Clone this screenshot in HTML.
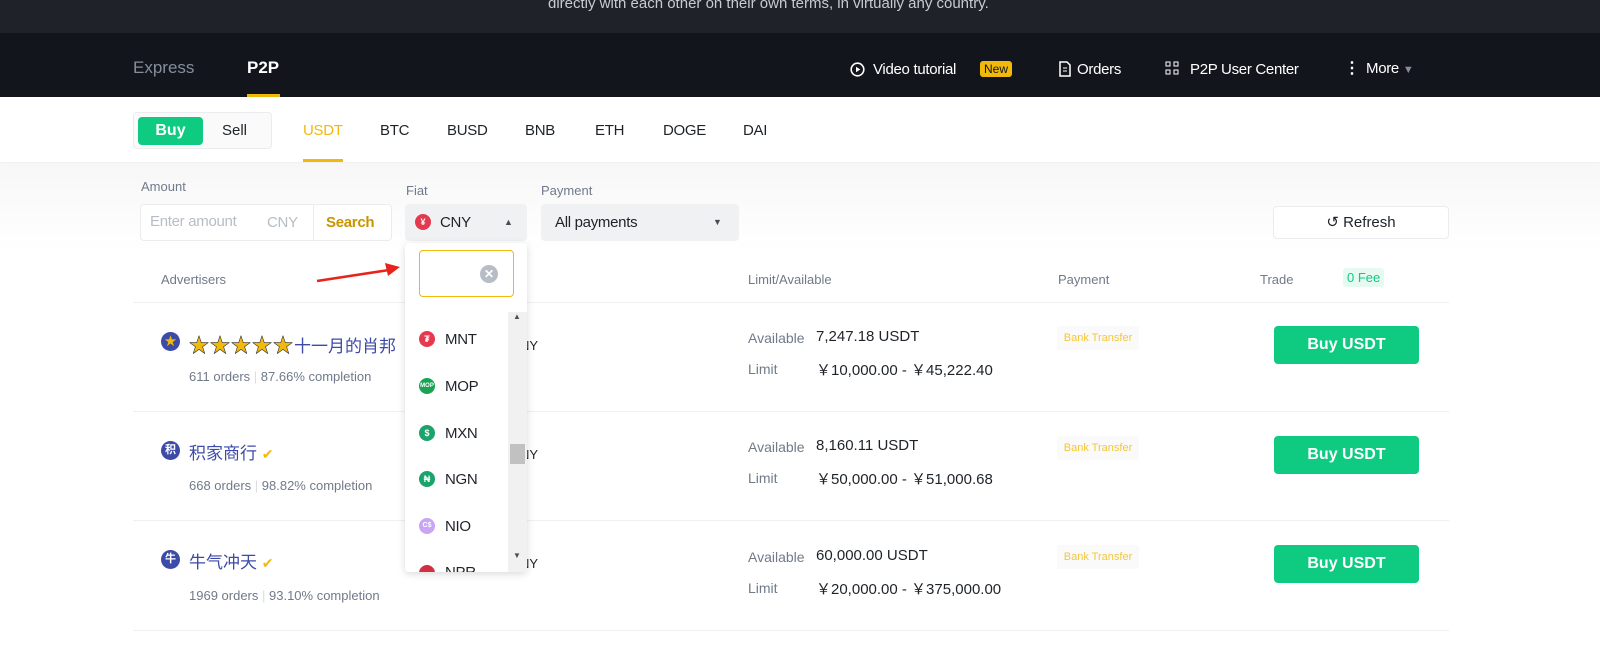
<!DOCTYPE html>
<html><head><meta charset="utf-8"><style>
*{margin:0;padding:0;box-sizing:border-box}
body{width:1600px;height:649px;overflow:hidden;font-family:"Liberation Sans","Noto Sans CJK SC",sans-serif;background:#fff;position:relative;color:#1e2329}
.a{position:absolute;white-space:nowrap}
.top{position:absolute;left:0;top:0;width:1600px;height:33px;background:#1f2228}
.nav{position:absolute;left:0;top:33px;width:1600px;height:64px;background:#12161c}
.bar{position:absolute;left:0;top:97px;width:1600px;height:65px;background:#fff;box-shadow:0 2px 4px rgba(0,0,0,.08)}
.filt{position:absolute;left:0;top:163px;width:1600px;height:90px;background:linear-gradient(#f7f7f7,#fff)}
.g{color:#707a8a}
.btn{background:#0ecb81;color:#fff;font-weight:bold;border-radius:4px;text-align:center}
.hr{position:absolute;left:133px;width:1316px;height:1px;background:#eef0f2}
.ic{position:absolute;width:16px;height:16px;border-radius:50%;color:#fff;font-size:9px;text-align:center;line-height:16px;font-weight:bold}
.bt{position:absolute;width:82px;height:24px;background:#fafafa;color:#f0b90b;font-size:11px;text-align:center;line-height:24px;border-radius:2px;opacity:.8}
.n{font-size:15px;letter-spacing:-.3px}
</style></head><body>
<div class="top"></div>
<div class="a" style="left:548px;top:-5px;color:#c8ccd2;font-size:15px">directly with each other on their own terms, in virtually any country.</div>
<div class="nav"></div>
<div class="a" style="left:133px;top:58px;color:#848e9c;font-size:17px">Express</div>
<div class="a" style="left:247px;top:58px;color:#fff;font-size:17px;font-weight:bold">P2P</div>
<div class="a" style="left:247px;top:94px;width:33px;height:3px;background:#f0b90b"></div>
<svg class="a" style="left:850px;top:62px" width="15" height="15"><circle cx="7.5" cy="7.5" r="6.3" fill="none" stroke="#fff" stroke-width="1.6"/><path d="M6 4.8L10.3 7.5 6 10.2z" fill="#fff"/></svg>
<div class="a n" style="left:873px;top:61px;color:#fff">Video tutorial</div>
<div class="a" style="left:980px;top:61px;background:#f0b90b;color:#12161c;font-size:12px;padding:1px 4px;border-radius:3px">New</div>
<svg class="a" style="left:1059px;top:61px" width="12" height="16"><path d="M1 1h7l3 3v11H1z" fill="none" stroke="#fff" stroke-width="1.5"/><path d="M4 7h4M4 10h4" stroke="#fff"/></svg>
<div class="a n" style="left:1077px;top:61px;color:#fff">Orders</div>
<svg class="a" style="left:1165px;top:61px" width="14" height="17"><rect x="1" y="1" width="4" height="4" fill="none" stroke="#fff"/><rect x="9" y="1" width="4" height="4" fill="none" stroke="#fff"/><rect x="1" y="9" width="4" height="4" fill="none" stroke="#fff"/><rect x="9" y="9" width="4" height="4" fill="none" stroke="#fff"/></svg>
<div class="a n" style="left:1190px;top:61px;color:#fff">P2P User Center</div>
<div class="a" style="left:1344px;top:58px;color:#fff;font-size:16px;font-weight:bold">⋮</div>
<div class="a n" style="left:1366px;top:60px;color:#fff">More <span style="color:#848e9c;font-size:11px">▼</span></div>
<div class="bar"></div>
<div class="a" style="left:133px;top:112px;width:139px;height:37px;border:1px solid #eaecef;border-radius:4px;background:#fafafa"></div>
<div class="a btn" style="left:138px;top:117px;width:65px;height:28px;line-height:28px;font-size:16px">Buy</div>
<div class="a" style="left:222px;top:122px;font-size:15px">Sell</div>
<div class="a n" style="left:303px;top:122px;color:#f0b90b">USDT</div>
<div class="a" style="left:303px;top:159px;width:40px;height:3px;background:#f0b90b"></div>
<div class="a n" style="left:380px;top:122px">BTC</div>
<div class="a n" style="left:447px;top:122px">BUSD</div>
<div class="a n" style="left:525px;top:122px">BNB</div>
<div class="a n" style="left:595px;top:122px">ETH</div>
<div class="a n" style="left:663px;top:122px">DOGE</div>
<div class="a n" style="left:743px;top:122px">DAI</div>
<div class="filt"></div>
<div class="a g" style="left:141px;top:179px;font-size:13px">Amount</div>
<div class="a" style="left:140px;top:204px;width:252px;height:37px;border:1px solid #eaecef;border-radius:4px;background:#fff"></div>
<div class="a" style="left:313px;top:205px;width:1px;height:35px;background:#eaecef"></div>
<div class="a n" style="left:150px;top:213px;color:#b7bdc6">Enter amount</div>
<div class="a n" style="left:267px;top:214px;color:#b7bdc6">CNY</div>
<div class="a n" style="left:326px;top:214px;color:#c99400;font-weight:bold">Search</div>
<div class="a g" style="left:406px;top:183px;font-size:13px">Fiat</div>
<div class="a" style="left:405px;top:204px;width:122px;height:37px;background:#f0f1f2;border-radius:4px"></div>
<div class="ic" style="left:415px;top:214px;background:#e5394f">¥</div>
<div class="a n" style="left:440px;top:214px">CNY</div>
<div class="a" style="left:504px;top:217px;font-size:9px;color:#474d57">▲</div>
<div class="a g" style="left:541px;top:183px;font-size:13px">Payment</div>
<div class="a" style="left:541px;top:204px;width:198px;height:37px;background:#f0f1f2;border-radius:4px"></div>
<div class="a n" style="left:555px;top:214px">All payments</div>
<div class="a" style="left:713px;top:217px;font-size:9px;color:#474d57">▼</div>
<div class="a" style="left:1273px;top:206px;width:176px;height:33px;border:1px solid #eaecef;border-radius:4px;background:#fff;text-align:center;line-height:31px;font-size:15px">↺ Refresh</div>
<div class="a g" style="left:161px;top:272px;font-size:13px">Advertisers</div>
<div class="a g" style="left:748px;top:272px;font-size:13px">Limit/Available</div>
<div class="a g" style="left:1058px;top:272px;font-size:13px">Payment</div>
<div class="a g" style="left:1260px;top:272px;font-size:13px">Trade</div>
<div class="a" style="left:1343px;top:268px;background:#e6faf2;color:#0ecb81;font-size:13px;padding:2px 4px;border-radius:3px">0 Fee</div>
<div class="hr" style="top:302px"></div>
<div class="hr" style="top:411px"></div>
<div class="hr" style="top:520px"></div>
<div class="hr" style="top:630px"></div>
<svg class="a" style="left:315px;top:262px" width="85" height="22"><path d="M2 19L74 8" stroke="#e8231c" stroke-width="2.5"/><path d="M85 5L70 1 73 14z" fill="#e8231c"/></svg>
<div class="ic" style="left:161px;top:332px;width:19px;height:19px;background:#3c4aa8;color:#f0b90b;font-size:12px;line-height:19px">★</div>
<div class="a" style="left:189px;top:329px;font-size:17px;color:#3c4aa8"><span style="color:#f0b90b;-webkit-text-stroke:.6px #333;font-size:20px;letter-spacing:1px">★★★★★</span>十一月的肖邦</div>
<div class="a g" style="left:189px;top:369px;font-size:13px">611 orders <span style="color:#ddd">|</span> 87.66% completion</div>
<div class="ic" style="left:161px;top:441px;width:19px;height:19px;background:#3c4aa8;font-size:11px;line-height:19px">积</div>
<div class="a" style="left:189px;top:439px;font-size:17px;color:#3c4aa8">积家商行 <span style="color:#f0b90b;font-size:14px">✔</span></div>
<div class="a g" style="left:189px;top:478px;font-size:13px">668 orders <span style="color:#ddd">|</span> 98.82% completion</div>
<div class="ic" style="left:161px;top:550px;width:19px;height:19px;background:#3c4aa8;font-size:11px;line-height:19px">牛</div>
<div class="a" style="left:189px;top:548px;font-size:17px;color:#3c4aa8">牛气冲天 <span style="color:#f0b90b;font-size:14px">✔</span></div>
<div class="a g" style="left:189px;top:588px;font-size:13px">1969 orders <span style="color:#ddd">|</span> 93.10% completion</div>
<div class="a" style="left:520px;top:338px;font-size:13px">NY</div>
<div class="a" style="left:520px;top:447px;font-size:13px">NY</div>
<div class="a" style="left:520px;top:556px;font-size:13px">NY</div>
<div class="a g" style="left:748px;top:330px;font-size:14px">Available</div>
<div class="a" style="left:816px;top:328px;font-size:15px">7,247.18 USDT</div>
<div class="a g" style="left:748px;top:361px;font-size:14px">Limit</div>
<div class="a" style="left:816px;top:359px;font-size:15px">￥10,000.00 - ￥45,222.40</div>
<div class="a g" style="left:748px;top:439px;font-size:14px">Available</div>
<div class="a" style="left:816px;top:437px;font-size:15px">8,160.11 USDT</div>
<div class="a g" style="left:748px;top:470px;font-size:14px">Limit</div>
<div class="a" style="left:816px;top:468px;font-size:15px">￥50,000.00 - ￥51,000.68</div>
<div class="a g" style="left:748px;top:549px;font-size:14px">Available</div>
<div class="a" style="left:816px;top:547px;font-size:15px">60,000.00 USDT</div>
<div class="a g" style="left:748px;top:580px;font-size:14px">Limit</div>
<div class="a" style="left:816px;top:578px;font-size:15px">￥20,000.00 - ￥375,000.00</div>
<div class="bt" style="left:1057px;top:326px">Bank Transfer</div>
<div class="bt" style="left:1057px;top:436px">Bank Transfer</div>
<div class="bt" style="left:1057px;top:545px">Bank Transfer</div>
<div class="a btn" style="left:1274px;top:326px;width:145px;height:38px;line-height:38px;font-size:16px">Buy USDT</div>
<div class="a btn" style="left:1274px;top:436px;width:145px;height:38px;line-height:38px;font-size:16px">Buy USDT</div>
<div class="a btn" style="left:1274px;top:545px;width:145px;height:38px;line-height:38px;font-size:16px">Buy USDT</div>
<div class="a" style="left:405px;top:243px;width:122px;height:329px;background:#fff;border-radius:4px;box-shadow:0 2px 8px rgba(0,0,0,.15);overflow:hidden">
<div class="a" style="left:14px;top:7px;width:95px;height:47px;border:1px solid #f0b90b;border-radius:4px"></div>
<div class="ic" style="left:75px;top:22px;width:18px;height:18px;background:#b7bdc6;font-size:12px;line-height:18px">✕</div>
<div class="a" style="left:103px;top:69px;width:19px;height:260px;background:#f1f1f1"></div>
<div class="a" style="left:105px;top:201px;width:15px;height:20px;background:#c1c1c1"></div>
<div class="a" style="left:108px;top:69px;font-size:8px;color:#505050">▲</div>
<div class="a" style="left:108px;top:308px;font-size:8px;color:#505050">▼</div>
<div class="ic" style="left:14px;top:88px;background:#e5394f">₮</div><div class="a n" style="left:40px;top:88px">MNT</div>
<div class="ic" style="left:14px;top:135px;background:#1aa352;font-size:6px">MOP</div><div class="a n" style="left:40px;top:135px">MOP</div>
<div class="ic" style="left:14px;top:182px;background:#1aa36b">$</div><div class="a n" style="left:40px;top:182px">MXN</div>
<div class="ic" style="left:14px;top:228px;background:#1aa36b">₦</div><div class="a n" style="left:40px;top:228px">NGN</div>
<div class="ic" style="left:14px;top:275px;background:#c9a5f5;font-size:7px">C$</div><div class="a n" style="left:40px;top:275px">NIO</div>
<div class="ic" style="left:14px;top:322px;background:#d03040"></div><div class="a n" style="left:40px;top:321px">NPR</div>
</div>
</body></html>
